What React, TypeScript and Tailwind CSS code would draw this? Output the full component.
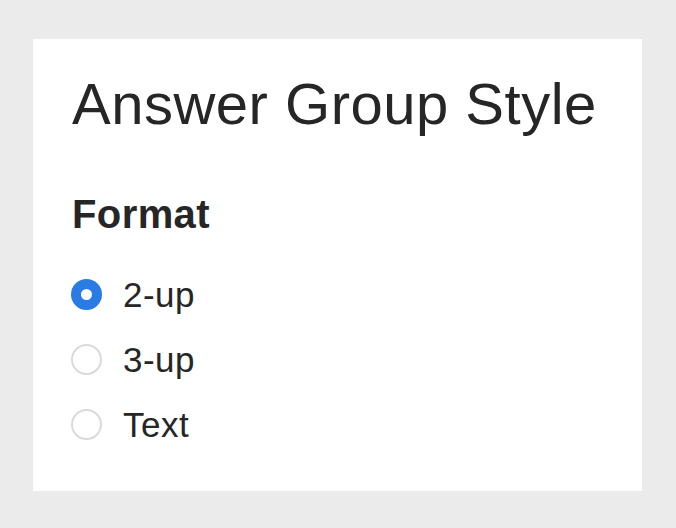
import { useState } from "react";

const OPTIONS = ["2-up", "3-up", "Text"];

export default function App() {
  const [format, setFormat] = useState("2-up");

  return (
    <div className="min-h-[528px] w-full bg-[#ebebeb] pt-[39px] pl-[33px]">
      <div
        className="w-[609px] h-[452px] bg-white pl-[38px] pt-[36px] text-[#262626]"
        style={{ fontFamily: '"Liberation Sans", Arial, sans-serif' }}
      >
        <h1 className="text-[58px] leading-[58px] font-normal ml-[1px] tracking-[0.5px]">
          Answer Group Style
        </h1>

        <h2 className="mt-[61px] text-[40px] leading-[40px] font-bold ml-[1px] tracking-[0.4px]">
          Format
        </h2>

        <div className="mt-[28px] flex flex-col">
          {OPTIONS.map((opt) => (
            <Radio
              key={opt}
              label={opt}
              checked={format === opt}
              onSelect={() => setFormat(opt)}
            />
          ))}
        </div>
      </div>
    </div>
  );
}

function Radio({
  label,
  checked,
  onSelect,
}: {
  label: string;
  checked: boolean;
  onSelect: () => void;
}) {
  return (
    <label className="flex h-[65px] items-center gap-[21px] cursor-pointer" onClick={onSelect}>
      {checked ? (
        <span className="flex h-[31px] w-[31px] items-center justify-center rounded-full bg-[#2a7be4]">
          <span className="h-[11px] w-[11px] rounded-full bg-white" />
        </span>
      ) : (
        <span className="h-[31px] w-[31px] rounded-full border-2 border-[#dadada] bg-white" />
      )}
      <span className="text-[35px] leading-[35px] mt-[-1px] tracking-[0.5px]">{label}</span>
    </label>
  );
}
